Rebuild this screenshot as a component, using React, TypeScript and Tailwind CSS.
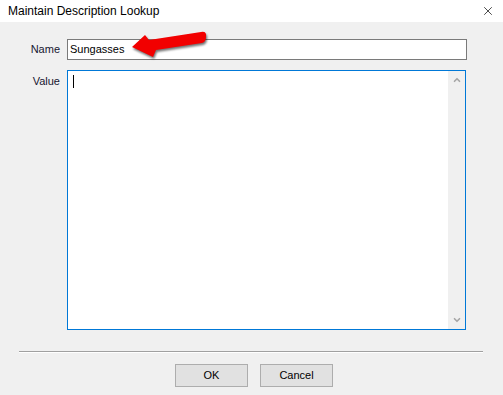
import { X, ChevronUp, ChevronDown } from "lucide-react"

function RedArrow() {
  return (
    <svg
      className="absolute left-[128px] top-[29px] drop-shadow-[1px_2px_1px_rgba(0,0,0,0.55)]"
      width="84"
      height="34"
      viewBox="128 29 84 34"
    >
      <path
        d="M132 47 L145 35 L149 40 L201 32 Q207 31 206 37 Q206 42 202 43 L156 50 L153 57 Z"
        fill="#f20000"
      />
    </svg>
  )
}

export default function App() {
  return (
    <div
      className="relative w-[503px] h-[395px] bg-[#f0f0f0] text-[12px] text-[#161630] overflow-hidden"
      style={{ fontFamily: '"Liberation Sans", Arial, sans-serif' }}
    >
      {/* title bar */}
      <div className="h-[22px] bg-white flex items-center justify-between pl-[8px] pr-[8px]">
        <span className="text-black text-[12px]">Maintain Description Lookup</span>
        <X size={14} strokeWidth={1.2} className="text-black" />
      </div>

      <div className="pt-[17px]">
        <div className="flex items-center">
          <label className="w-[61px] text-right pr-[1px] text-[11px]">Name</label>
          <div className="ml-[6px] w-[400px] h-[21px] bg-white border border-[#7a7a7a] flex items-center pl-[2px] text-[11px] text-black">
            Sungasses
          </div>
        </div>

        <div className="flex items-start mt-[10px]">
          <label className="w-[61px] text-right pr-[1px] pt-[3px] text-[11px]">Value</label>
          <div className="ml-[6px] w-[399px] h-[260px] bg-white border border-[#0078d7] flex">
            <div className="flex-1 pl-[5px] pt-[4px]">
              <div className="w-px h-[13px] bg-black" />
            </div>
            <div className="w-[17px] bg-[#f0f0f0] flex flex-col items-center justify-between py-[4px] text-[#a6a6a6]">
              <ChevronUp size={10} strokeWidth={4} />
              <ChevronDown size={10} strokeWidth={4} />
            </div>
          </div>
        </div>

        <div className="mt-[21px] ml-[19px] w-[464px] border-t border-t-[#a0a0a0] border-b border-b-white" />

        <div className="flex gap-[12px] ml-[175px] mt-[11px]">
          <button className="w-[73px] h-[23px] bg-[#e1e1e1] border border-[#adadad] text-[11px] text-black">
            OK
          </button>
          <button className="w-[73px] h-[23px] bg-[#e1e1e1] border border-[#adadad] text-[11px] text-black">
            Cancel
          </button>
        </div>
      </div>

      <RedArrow />
    </div>
  )
}
